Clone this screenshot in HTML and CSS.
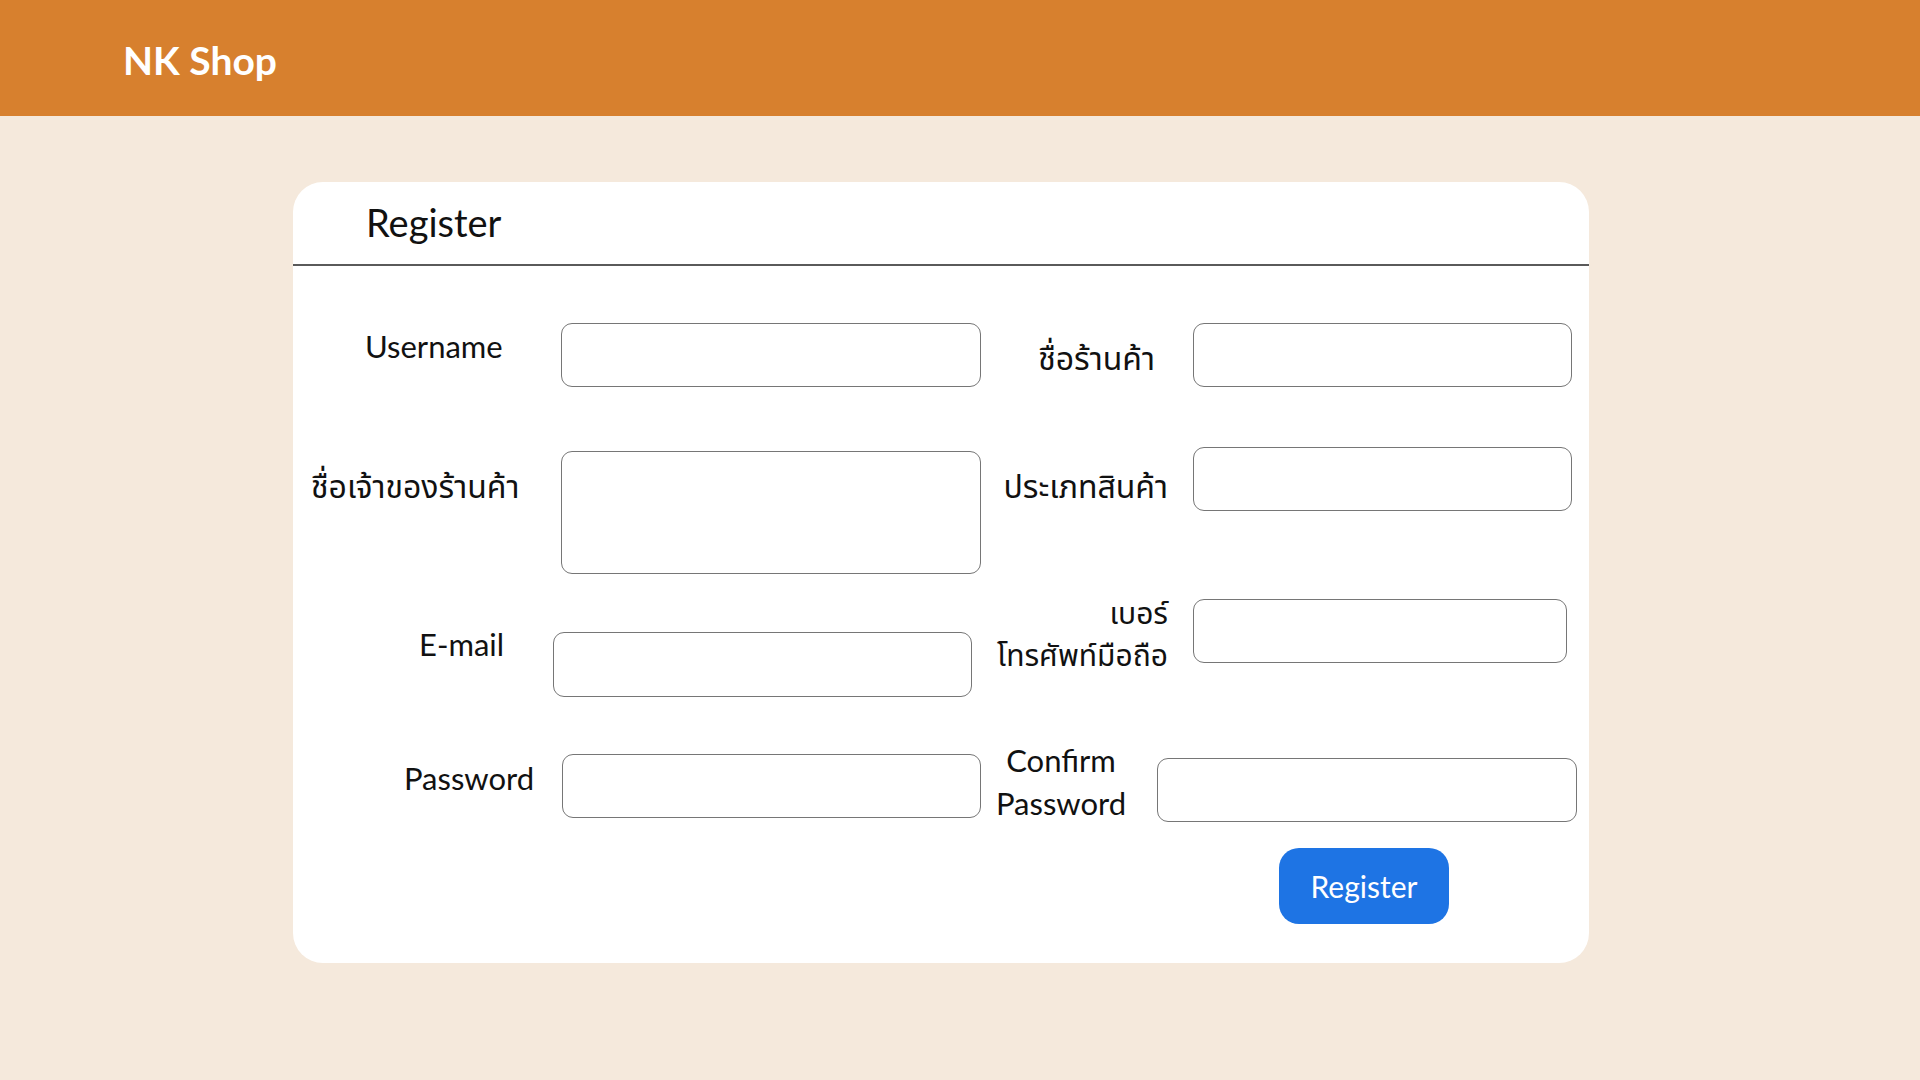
FILE: index.html
```html
<!DOCTYPE html>
<html lang="th">
<head>
<meta charset="utf-8">
<title>NK Shop - Register</title>
<link rel="stylesheet" href="styles.css">
</head>
<body>
<header class="topbar">
  <div class="brand">NK Shop</div>
</header>
<main class="page">
  <section class="card">
    <div class="card-head">
      <h1 class="card-title">Register</h1>
    </div>
    <form class="card-body">
      <div class="row row-1">
        <label class="lbl lbl-user" for="username">Username</label>
        <input class="field field-user" id="username" type="text">
        <label class="rlbl th rlbl-shop" for="shop">ชื่อร้านค้า</label>
        <input class="field field-shop" id="shop" type="text">
      </div>
      <div class="row row-2">
        <label class="lbl th lbl-owner" for="owner">ชื่อเจ้าของร้านค้า</label>
        <textarea class="field field-owner" id="owner"></textarea>
        <label class="rlbl th rlbl-type" for="type">ประเภทสินค้า</label>
        <input class="field field-type" id="type" type="text">
      </div>
      <div class="row row-3">
        <label class="lbl lbl-mail" for="email">E-mail</label>
        <input class="field field-mail" id="email" type="email">
        <label class="rlbl rlbl-phone" for="phone">เบอร์<br>โทรศัพท์มือถือ</label>
        <input class="field field-phone" id="phone" type="text">
      </div>
      <div class="row row-4">
        <label class="lbl lbl-pass" for="password">Password</label>
        <input class="field field-pass" id="password" type="password">
        <label class="rlbl rlbl-confirm" for="confirm">Confirm<br>Password</label>
        <input class="field field-confirm" id="confirm" type="password">
      </div>
      <div class="actions">
        <button class="btn-register" type="button">Register</button>
      </div>
    </form>
  </section>
</main>
</body>
</html>
```

FILE: styles.css
```css
* {
  box-sizing: border-box;
}

html, body {
  margin: 0;
  padding: 0;
}

body {
  width: 1920px;
  height: 1080px;
  background: #f5e9dc;
  font-family: Lato, "Noto Sans Thai", "Noto Sans", "DejaVu Sans", sans-serif;
  color: #111;
  overflow: hidden;
}

.topbar {
  height: 116px;
  background: #d7802e;
  display: flex;
  align-items: center;
  padding-left: 123px;
  padding-top: 4px;
}

.brand {
  color: #fff;
  font-size: 39px;
  font-weight: 700;
  line-height: 1;
}

.page {
  padding: 66px 0 0 293px;
}

.card {
  width: 1296px;
  background: #fff;
  border-radius: 30px;
  padding-bottom: 39px;
}

.card-head {
  height: 84px;
  padding: 17px 0 0 73px;
  border-bottom: 2px solid #5a5a5a;
}

.card-title {
  margin: 0;
  font-size: 38px;
  font-weight: 400;
  line-height: 46px;
  color: #111;
}

.card-body {
  display: flex;
  flex-direction: column;
  padding-top: 57px;
}

.row {
  display: flex;
  align-items: flex-start;
}

.lbl,
.rlbl {
  font-size: 31px;
  line-height: 42px;
  color: #111;
  flex: none;
  white-space: nowrap;
}

.th {
  font-size: 32px;
}

.rlbl {
  text-align: right;
}

.field {
  flex: none;
  height: 64px;
  border: 1px solid #767676;
  border-radius: 11px;
  background: #fff;
  font: inherit;
  font-size: 24px;
  padding: 0 12px;
  outline: none;
}

textarea.field {
  resize: none;
  padding: 10px 12px;
}

/* row 1 */
.row-1 { height: 64px; }
.lbl-user { width: 268px; padding-left: 72px; margin-top: 2px; }
.field-user { width: 420px; }
.rlbl-shop { width: 212px; padding-right: 38px; margin-top: 14px; }
.field-shop { width: 379px; }

/* row 2 */
.row-2 { margin-top: 60px; height: 127px; }
.lbl-owner { width: 268px; padding-left: 18px; margin-top: 18px; }
.field-owner { width: 420px; height: 123px; margin-top: 4px; }
.rlbl-type { width: 212px; padding-right: 25px; margin-top: 18px; }
.field-type { width: 379px; }

/* row 3 */
.row-3 { margin-top: 25px; height: 98px; }
.lbl-mail { width: 260px; padding-left: 126px; margin-top: 24px; }
.field-mail { width: 419px; height: 65px; margin-top: 33px; }
.rlbl-phone { width: 221px; padding-right: 25px; margin-top: -8px; font-size: 30px; }
.field-phone { width: 374px; }

/* row 4 */
.row-4 { margin-top: 57px; height: 68px; }
.lbl-pass { width: 269px; padding-left: 111px; margin-top: 3px; }
.field-pass { width: 419px; }
.rlbl-confirm { width: 176px; padding-right: 16px; text-align: center; line-height: 43px; margin-top: -15px; }
.field-confirm { width: 420px; margin-top: 4px; }

.actions {
  margin-top: 26px;
  padding-left: 986px;
}

.btn-register {
  width: 170px;
  height: 76px;
  border: none;
  border-radius: 20px;
  background: #1e74e4;
  color: #fff;
  font-family: inherit;
  font-size: 30px;
  padding: 0;
  cursor: pointer;
}
```
